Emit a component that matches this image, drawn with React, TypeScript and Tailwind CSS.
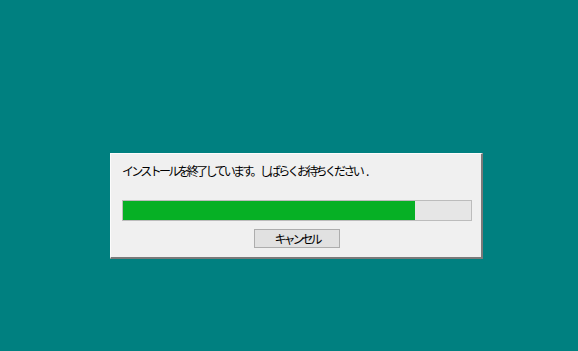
import React from 'react';

const font = { fontFamily: '"Noto Sans CJK JP", "Noto Sans", sans-serif' };

const App: React.FC = () => {
  const progress = 84;

  return (
    <div className="w-[578px] h-[351px] bg-[#008080] pt-[153px] pl-[110px]" style={font}>
      {/* Dialog */}
      <div className="w-[373px] h-[106px] bg-[#f0f0f0] border-t border-l border-[#fcfcfc] border-r-2 border-b-2 border-r-[#7a7a7a] border-b-[#7a7a7a] flex flex-col pl-[11px] pr-[9px]">
        <div className="h-[46px] pt-[8px] text-[12px] leading-[18px] tracking-[-2.7px] text-black">
          インストールを終了しています。しばらくお待ちください<span className="ml-[4px] tracking-normal">.</span>
        </div>

        {/* Progress bar */}
        <div className="w-[350px] h-[21px] border border-[#bcbcbc] bg-[#e6e6e6]">
          <div className="h-full bg-[#06b025]" style={{ width: `${progress}%` }} />
        </div>

        <div className="flex justify-center pt-[8px]">
          <button className="w-[86px] h-[19px] bg-[#e1e1e1] border border-[#adadad] text-[12px] leading-[17px] tracking-[-3px] text-black">
            キャンセル
          </button>
        </div>
      </div>
    </div>
  );
};

export default App;
